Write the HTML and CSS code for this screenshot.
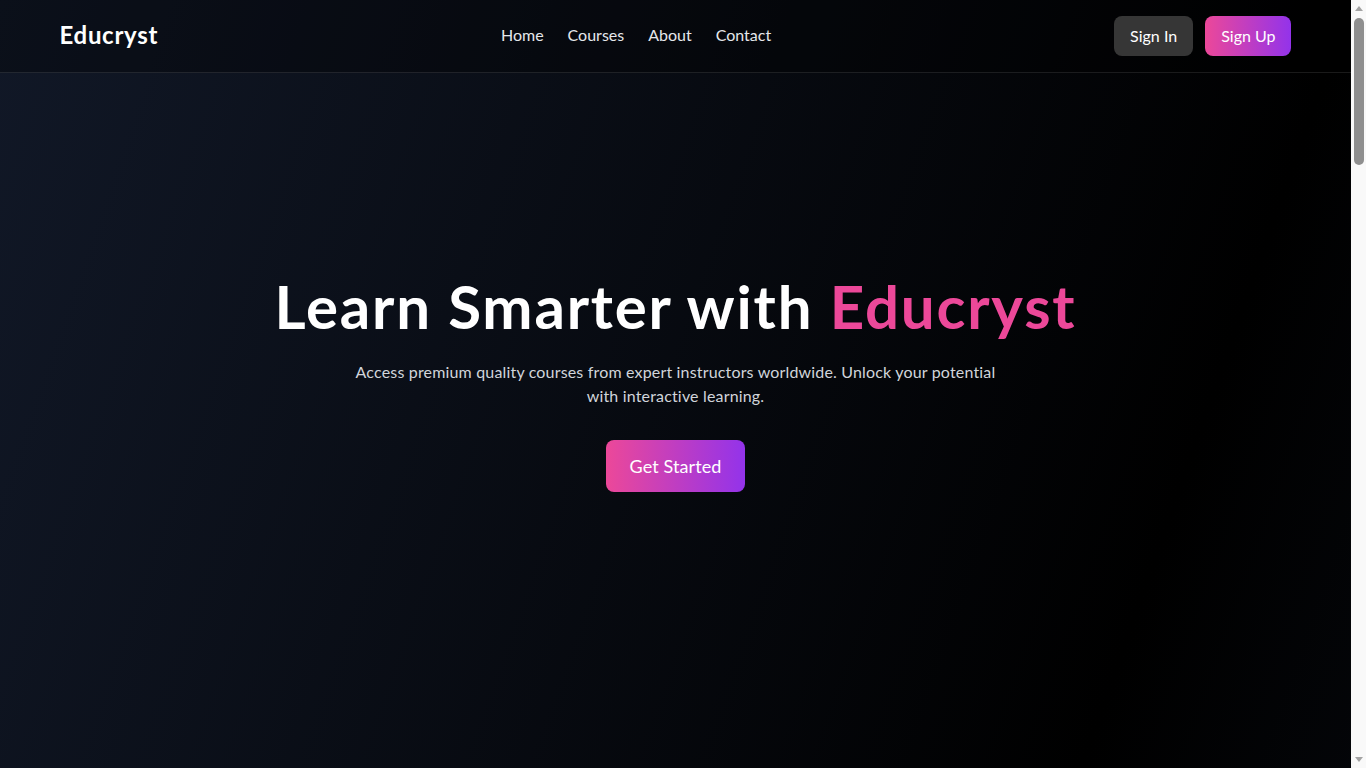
FILE: index.html
```html
<!DOCTYPE html>
<html lang="en">
<head>
<meta charset="utf-8">
<title>Educryst — Learn Smarter</title>
<link rel="stylesheet" href="styles.css">
</head>
<body>
<div class="page">
  <header class="site-header">
    <div class="container header-inner">
      <a class="logo" href="#">Educryst</a>
      <nav class="main-nav">
        <a href="#">Home</a>
        <a href="#">Courses</a>
        <a href="#">About</a>
        <a href="#">Contact</a>
      </nav>
      <div class="auth">
        <a class="btn btn-dark" href="#">Sign In</a>
        <a class="btn btn-grad" href="#">Sign Up</a>
      </div>
    </div>
  </header>

  <main class="hero">
    <div class="hero-content">
      <h1 class="hero-title">Learn Smarter with <span class="accent">Educryst</span></h1>
      <p class="hero-sub">Access premium quality courses from expert instructors worldwide. Unlock your potential with interactive learning.</p>
      <a class="btn btn-grad btn-lg" href="#">Get Started</a>
    </div>
  </main>
</div>

<div class="scrollbar" aria-hidden="true">
  <div class="sb-arrow sb-up"></div>
  <div class="sb-track"><div class="sb-thumb"></div></div>
  <div class="sb-arrow sb-down"></div>
</div>
</body>
</html>
```

FILE: styles.css
```css
* { box-sizing: border-box; }
html, body { margin: 0; padding: 0; }
body {
  display: flex;
  height: 100vh;
  overflow: hidden;
  font-family: "Lato", "Noto Sans", sans-serif;
  color: #fff;
  background: #000;
}
a { color: inherit; text-decoration: none; }

.page {
  position: relative;
  flex: 1;
  min-width: 0;
}

.container {
  max-width: 1280px;
  margin: 0 auto;
  padding: 0 24px;
}

.site-header {
  position: absolute;
  top: 0;
  left: 0;
  right: 0;
  z-index: 10;
  background: rgba(0, 0, 0, 0.32);
  border-bottom: 1px solid rgba(255, 255, 255, 0.1);
}
.header-inner {
  display: flex;
  align-items: center;
  justify-content: space-between;
  padding-top: 16px;
  padding-bottom: 16px;
}
.logo {
  font-size: 24px;
  line-height: 32px;
  font-weight: 700;
  letter-spacing: 0.7px;
  color: #fff;
  position: relative;
  top: -1px;
}
.main-nav {
  display: flex;
  gap: 24px;
  font-size: 16px;
  line-height: 24px;
  position: relative;
  top: -1px;
}
.main-nav a { color: #e5e7eb; }
.auth {
  display: flex;
  gap: 12px;
}
.btn {
  display: inline-block;
  padding: 8px 16px;
  border-radius: 8px;
  font-size: 16px;
  line-height: 24px;
  color: #fff;
}
.btn-dark { background: #363636; }
.btn-grad { background: linear-gradient(to right, #ec4899, #9333ea); }
.btn-lg {
  padding: 12px 24px;
  font-size: 18px;
  line-height: 28px;
  letter-spacing: 0.1px;
}

.hero {
  height: 100vh;
  display: flex;
  align-items: center;
  justify-content: center;
  background: linear-gradient(109.4deg, #111827 0px, #000000 1275px, #111827 2551px);
  text-align: center;
}
.hero-content {
  display: flex;
  flex-direction: column;
  align-items: center;
}
.hero-title {
  margin: 0 0 24px;
  font-size: 60px;
  line-height: 60px;
  font-weight: 700;
  letter-spacing: 1.8px;
}
.accent { color: #ec4899; }
.hero-sub {
  margin: 0 0 32px;
  max-width: 672px;
  font-size: 16px;
  line-height: 24px;
  letter-spacing: 0.17px;
  color: #d1d5db;
}

/* browser scrollbar as seen in the reference */
.scrollbar {
  width: 15px;
  height: 100vh;
  flex: none;
  display: flex;
  flex-direction: column;
  background: #f9f9f9;
}
.sb-arrow {
  height: 17px;
  flex: none;
  display: flex;
  align-items: center;
  justify-content: center;
}
.sb-up::before,
.sb-down::before {
  content: "";
  width: 0;
  height: 0;
  border-left: 4px solid transparent;
  border-right: 4px solid transparent;
}
.sb-up::before { border-bottom: 5px solid #a3a3a3; }
.sb-down::before { border-top: 5px solid #a3a3a3; }
.sb-track {
  flex: 1;
  padding: 1px 2px 0 3px;
}
.sb-thumb {
  height: 147px;
  border-radius: 5px;
  background: #8f8f8f;
}
```
